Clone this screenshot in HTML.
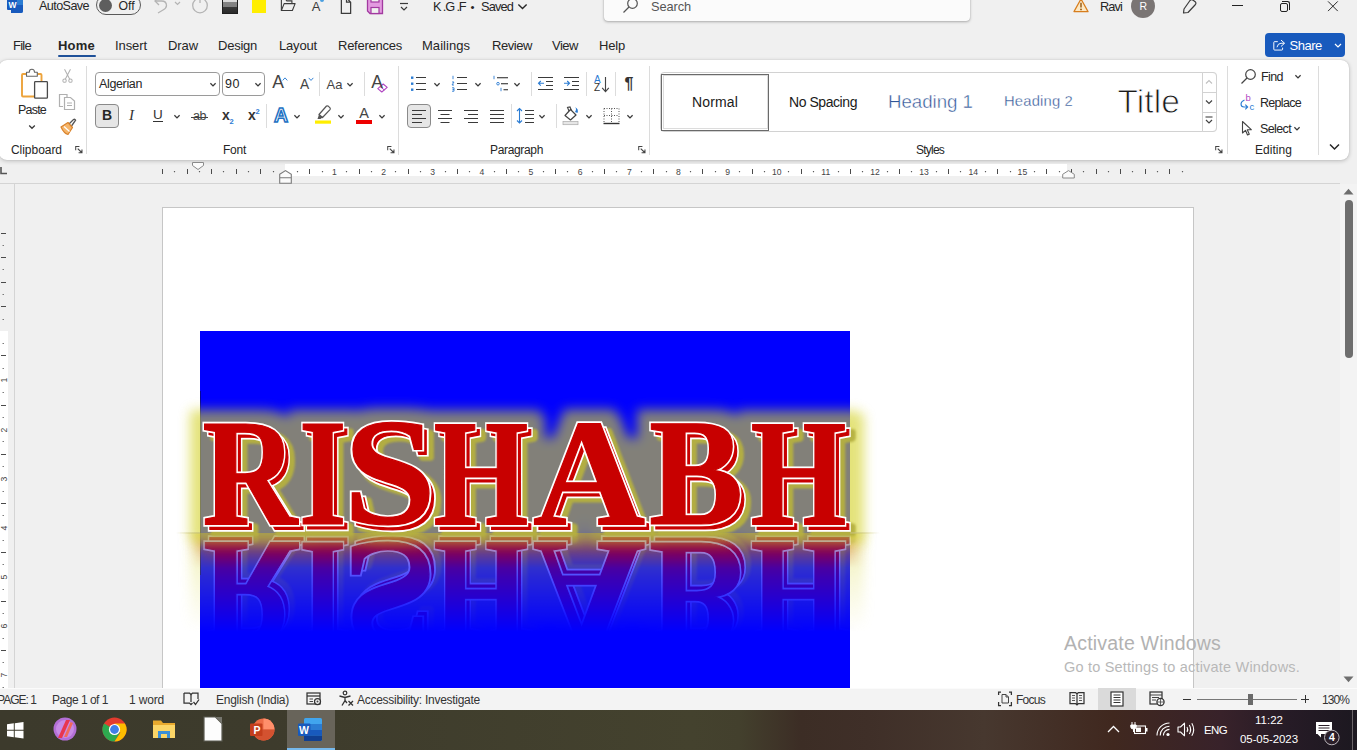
<!DOCTYPE html>
<html lang="en"><head><meta charset="utf-8"><title>K.G.F - Word</title>
<style>
*{box-sizing:border-box;margin:0;padding:0}
html,body{width:1357px;height:750px;overflow:hidden;background:#f0f0f0;font-family:"Liberation Sans",sans-serif;}
.a{position:absolute}
.t{position:absolute;white-space:nowrap;display:block}
svg{position:absolute;overflow:visible}
.rn{width:20px;text-align:center;font-size:8.6px;line-height:12px;color:#444}
.vn{width:20px;height:12px;text-align:center;font-size:8.6px;line-height:12px;color:#444;transform:rotate(-90deg)}
</style></head><body>

<!-- TITLE BAR -->
<div class="a" style="left:0;top:0;width:1357px;height:62px;background:#f0f0f0"></div>
<!-- word logo -->
<div class="a" style="left:11px;top:-4px;width:12px;height:17px;background:#2b7cd3;border-radius:0 0 2px 0"></div>
<div class="a" style="left:11px;top:5px;width:12px;height:8px;background:#185abd;border-radius:0 0 2px 0"></div>
<div class="a" style="left:7px;top:-2px;width:10px;height:12px;background:#185abd;border-radius:1px"></div>
<!-- autosave toggle -->
<div class="a" style="left:96px;top:-5px;width:45px;height:19.5px;border:1px solid #5a5a5a;border-radius:10px;background:#f0f0f0"></div>
<div class="a" style="left:98.7px;top:-1.4px;width:13.5px;height:13.5px;border-radius:7px;background:#5e5e5e"></div>
<div class="a" style="left:320px;top:-2.3px;width:4px;height:4px;border-radius:2px;background:#4a9fe0"></div>
<!-- undo -->
<svg style="left:152px;top:-3px" width="30" height="18" viewBox="0 0 30 18"><path d="M3 4 L9.5 4 Q14.5 4 14.5 8.5 Q14.5 11 11 13 L6 16" fill="none" stroke="#b4b4b4" stroke-width="1.3"/><path d="M7 0 L3 4 L7 8" fill="none" stroke="#b4b4b4" stroke-width="1.3"/><path d="M23 5 L25.5 7.5 L28 5" fill="none" stroke="#b4b4b4" stroke-width="1.2"/></svg>
<!-- redo circle -->
<svg style="left:191px;top:-4px" width="18" height="18" viewBox="0 0 18 18"><circle cx="9" cy="9.5" r="7.3" fill="none" stroke="#b4b4b4" stroke-width="1.3"/><path d="M9 2 L9 7" stroke="#b4b4b4" stroke-width="1.3"/></svg>
<!-- grey/black box -->
<div class="a" style="left:222px;top:-4px;width:16px;height:17.8px;background:linear-gradient(#e8e8e8 0,#d8d8d8 36%,#858585 36%,#7f7f7f 64%,#3a3a3a 64%,#2a2a2a 100%);border:1px solid #1e1e1e;border-top:none"></div>
<!-- yellow box -->
<div class="a" style="left:252px;top:-4px;width:14px;height:16.8px;background:#ffee00"></div>
<!-- open folder -->
<svg style="left:279.5px;top:-1.8px" width="16.5" height="15" viewBox="0 0 18 16"><path d="M1.5 13.5 L1.5 1 L6 1 L7.5 3 L13 3 L13 6" fill="none" stroke="#3b3b3b" stroke-width="1.2"/><path d="M1.5 13.5 L4.5 6 L16.5 6 L13.5 13.5 Z" fill="none" stroke="#3b3b3b" stroke-width="1.2" stroke-linejoin="round"/></svg>
<!-- page -->
<svg style="left:340.3px;top:-3px" width="12" height="17.5" viewBox="0 0 11 17"><path d="M1 0 L1 16 L10 16 L10 5 L6 1 M6 0 L6 5 L10 5" fill="none" stroke="#3b3b3b" stroke-width="1.2"/></svg>
<!-- save purple -->
<svg style="left:366px;top:-3.4px" width="18" height="18" viewBox="0 0 18 18"><path d="M1.5 0 L1.5 14 L4 16.5 L16.5 16.5 L16.5 0 Z" fill="#e39ae0" stroke="#a23aa0" stroke-width="1.3"/><rect x="5" y="-1" width="8" height="6" fill="#f0f0f0" stroke="#a23aa0" stroke-width="1.2"/><rect x="5" y="10.5" width="8" height="6" fill="#f0f0f0" stroke="#a23aa0" stroke-width="1.2"/></svg>
<!-- customise qat -->
<svg style="left:398.5px;top:1.6px" width="10" height="10" viewBox="0 0 10 10"><path d="M1 1.5 L9 1.5" stroke="#3b3b3b" stroke-width="1.2"/><path d="M2 5 L5 8 L8 5" fill="none" stroke="#3b3b3b" stroke-width="1.2"/></svg>
<!-- saved chevron -->
<svg style="left:516.5px;top:3.2px" width="11" height="7.4" viewBox="0 0 12 8"><path d="M1.5 1.5 L6 6 L10.5 1.5" fill="none" stroke="#262626" stroke-width="1.5"/></svg>
<!-- search box -->
<div class="a" style="left:603.5px;top:-10px;width:366.5px;height:31.3px;background:#fbfbfb;border-radius:4px;box-shadow:0 1px 3px rgba(0,0,0,.28),0 0 1px rgba(0,0,0,.25)"></div>
<svg style="left:622px;top:-3px" width="17" height="17" viewBox="0 0 17 17"><circle cx="10.5" cy="6.5" r="4.8" fill="none" stroke="#555" stroke-width="1.2"/><path d="M7 10 L1.5 15.5" stroke="#555" stroke-width="1.3"/></svg>
<!-- warning -->
<svg style="left:1072.5px;top:-2.3px" width="16" height="15" viewBox="0 0 17 16"><path d="M8.5 1 L16 14.5 L1 14.5 Z" fill="#fce8c4" stroke="#d77d1d" stroke-width="1.3" stroke-linejoin="round"/><path d="M8.5 5 L8.5 10" stroke="#8a4a00" stroke-width="1.4"/><circle cx="8.5" cy="12.2" r=".9" fill="#8a4a00"/></svg>
<!-- avatar -->
<div class="a" style="left:1131px;top:-6px;width:24px;height:24px;border-radius:12px;background:#7a7574"></div>
<!-- pen -->
<svg style="left:1181px;top:-4px" width="19" height="19" viewBox="0 0 19 19"><path d="M3 13 L9 4.5 Q10.5 3 12.5 4.5 L14.5 6 Q15.5 7.5 14 9 L7 16.5 L2.5 17 Z" fill="none" stroke="#3b3b3b" stroke-width="1.2" stroke-linejoin="round"/><path d="M12 2 L15 0 M15.5 3 L17.5 2" stroke="#2b7cd3" stroke-width="1.1"/></svg>
<!-- window buttons -->
<div class="a" style="left:1232px;top:4.6px;width:10.5px;height:1.1px;background:#222"></div>
<div class="a" style="left:1279.5px;top:3px;width:8.5px;height:8.5px;border:1px solid #222;border-radius:2px"></div>
<div class="a" style="left:1281.5px;top:1px;width:8.5px;height:8.5px;border:1px solid #222;border-left:none;border-bottom:none;border-radius:0 2.5px 0 0"></div>
<svg style="left:1327.3px;top:.6px" width="11.8" height="11.3" viewBox="0 0 14 14"><path d="M1 .5 L13 12.5 M13 .5 L1 12.5" stroke="#222" stroke-width="1.2"/></svg>
<!-- home underline -->
<div class="a" style="left:58px;top:55px;width:37.5px;height:2px;background:#1f5199;border-radius:1px"></div>
<!-- share button -->
<div class="a" style="left:1265px;top:33px;width:80px;height:24px;background:#185abd;border-radius:4px"></div>
<svg style="left:1272.6px;top:39px" width="12.8" height="12.5" viewBox="0 0 16 15"><path d="M6 3 L2 3 Q1 3 1 4 L1 12.5 Q1 13.5 2 13.5 L11 13.5 Q12 13.5 12 12.5 L12 10.5" fill="none" stroke="#fff" stroke-width="1.2"/><path d="M10 1 L14.5 5 L10 9 M14 5 L10 5 Q6 5 5 10" fill="none" stroke="#fff" stroke-width="1.2"/></svg>
<svg style="left:1334px;top:43px" width="8" height="6" viewBox="0 0 8 6"><path d="M1 1 L4 4 L7 1" fill="none" stroke="#fff" stroke-width="1.2"/></svg>

<!-- RIBBON -->
<div class="a" style="left:-1px;top:60px;width:1350px;height:100px;background:#fff;border-radius:8px;box-shadow:0 1px 4px rgba(0,0,0,.22),0 0 1px rgba(0,0,0,.2)"></div>
<!-- group separators -->
<div class="a" style="left:86.2px;top:66px;width:1px;height:88px;background:#dcdcdc"></div>
<div class="a" style="left:398px;top:66px;width:1px;height:89px;background:#dcdcdc"></div>
<div class="a" style="left:649px;top:66px;width:1px;height:89px;background:#dcdcdc"></div>
<div class="a" style="left:1227.3px;top:66px;width:1px;height:88px;background:#dcdcdc"></div>
<div class="a" style="left:1318px;top:66px;width:1px;height:89px;background:#dcdcdc"></div>
<!-- small separators -->
<div class="a" style="left:319.2px;top:72px;width:1px;height:24px;background:#dcdcdc"></div>
<div class="a" style="left:364px;top:72px;width:1px;height:24px;background:#dcdcdc"></div>
<div class="a" style="left:266px;top:104px;width:1px;height:24px;background:#dcdcdc"></div>
<div class="a" style="left:531px;top:72px;width:1px;height:24px;background:#dcdcdc"></div>
<div class="a" style="left:586px;top:72px;width:1px;height:24px;background:#dcdcdc"></div>
<div class="a" style="left:615px;top:72px;width:1px;height:24px;background:#dcdcdc"></div>
<div class="a" style="left:511px;top:104px;width:1px;height:24px;background:#dcdcdc"></div>
<div class="a" style="left:556px;top:104px;width:1px;height:24px;background:#dcdcdc"></div>

<!-- CLIPBOARD -->
<svg style="left:19px;top:67px" width="30" height="33" viewBox="0 0 30 33"><rect x="3" y="7" width="19.5" height="22.5" rx="1" fill="#fff" stroke="#eda33b" stroke-width="1.9"/><path d="M7.5 9.2 L7.5 5.2 L10.3 5.2 Q10.3 2.2 12.9 2.2 Q15.5 2.2 15.5 5.2 L18.3 5.2 L18.3 9.2 Z" fill="#fff" stroke="#666" stroke-width="1.1" stroke-linejoin="round"/><rect x="15.6" y="14.6" width="12.8" height="16.6" rx=".8" fill="#fff" stroke="#4a4a4a" stroke-width="1.3"/></svg>
<svg style="left:27.5px;top:123.5px" width="8" height="6" viewBox="0 0 8 6"><path d="M1.2 1.5 L4 4.3 L6.8 1.5" fill="none" stroke="#3a3a3a" stroke-width="1.3"/></svg>
<!-- cut -->
<svg style="left:61.8px;top:68px" width="11" height="16" viewBox="0 0 13 18"><path d="M3 1 L9 12.5 M10 1 L4 12.5" stroke="#b0b0b0" stroke-width="1.2" fill="none"/><circle cx="3" cy="14.5" r="2" fill="none" stroke="#b0b0b0" stroke-width="1.2"/><circle cx="10" cy="14.5" r="2" fill="none" stroke="#b0b0b0" stroke-width="1.2"/></svg>
<!-- copy -->
<svg style="left:58px;top:93px" width="18" height="18" viewBox="0 0 18 18"><path d="M5 13.5 L1.5 13.5 L1.5 1.5 L9 1.5 L9 4" fill="none" stroke="#b0b0b0" stroke-width="1.2"/><path d="M6.5 4.5 L12.5 4.5 L16.5 8 L16.5 16.5 L6.5 16.5 Z" fill="#fff" stroke="#b0b0b0" stroke-width="1.2"/><path d="M9 10 L14 10 M9 12.5 L14 12.5" stroke="#b0b0b0" stroke-width="1"/></svg>
<!-- format painter -->
<svg style="left:59px;top:118px" width="18" height="18" viewBox="0 0 18 18"><path d="M10 6 L14.5 1.5 Q16 .8 16.6 2.2 L12.5 8" fill="none" stroke="#555" stroke-width="1.3"/><path d="M2 9 L9 4.5 L13.5 9.5 L9 16.5 Q5 15.5 2 9 Z" fill="#f5b56a" stroke="#d9822b" stroke-width="1.2" stroke-linejoin="round"/><path d="M5 8.5 L10.5 13.5" stroke="#fff" stroke-width="1.2"/></svg>
<!-- launchers -->
<svg class="ln" style="left:75.2px;top:146.3px" width="8" height="7.6" viewBox="0 0 9 9"><path d="M.6 5 L.6 .6 L5 .6" fill="none" stroke="#444" stroke-width="1.2"/><path d="M3 3 L8 8 M8 4 L8 8 L4 8" fill="none" stroke="#444" stroke-width="1.3"/></svg>
<svg class="ln" style="left:387.2px;top:146.3px" width="8" height="7.6" viewBox="0 0 9 9"><path d="M.6 5 L.6 .6 L5 .6" fill="none" stroke="#444" stroke-width="1.2"/><path d="M3 3 L8 8 M8 4 L8 8 L4 8" fill="none" stroke="#444" stroke-width="1.3"/></svg>
<svg class="ln" style="left:637.5px;top:146.3px" width="8" height="7.6" viewBox="0 0 9 9"><path d="M.6 5 L.6 .6 L5 .6" fill="none" stroke="#444" stroke-width="1.2"/><path d="M3 3 L8 8 M8 4 L8 8 L4 8" fill="none" stroke="#444" stroke-width="1.3"/></svg>
<svg class="ln" style="left:1215.2px;top:146.3px" width="8" height="7.6" viewBox="0 0 9 9"><path d="M.6 5 L.6 .6 L5 .6" fill="none" stroke="#444" stroke-width="1.2"/><path d="M3 3 L8 8 M8 4 L8 8 L4 8" fill="none" stroke="#444" stroke-width="1.3"/></svg>

<!-- FONT group -->
<div class="a" style="left:95px;top:72px;width:125px;height:24px;border:1px solid #9a9a9a;border-radius:4px;background:#fff"></div>
<div class="a" style="left:222px;top:72px;width:43px;height:24px;border:1px solid #9a9a9a;border-radius:4px;background:#fff"></div>
<svg style="left:209px;top:82px" width="8" height="6" viewBox="0 0 8 6"><path d="M1.4 1.3 L4 3.9 L6.6 1.3" fill="none" stroke="#3a3a3a" stroke-width="1.3"/></svg>
<svg style="left:254px;top:82px" width="8" height="6" viewBox="0 0 8 6"><path d="M1.4 1.3 L4 3.9 L6.6 1.3" fill="none" stroke="#3a3a3a" stroke-width="1.3"/></svg>
<!-- grow / shrink carets -->
<svg style="left:281.8px;top:76.8px" width="6" height="4.3" viewBox="0 0 7 5"><path d="M.8 4 L3.5 1 L6.2 4" fill="none" stroke="#2b7cd3" stroke-width="1.1"/></svg>
<svg style="left:307.8px;top:77px" width="6" height="4.3" viewBox="0 0 7 5"><path d="M.8 1 L3.5 4 L6.2 1" fill="none" stroke="#2b7cd3" stroke-width="1.1"/></svg>
<svg style="left:346px;top:82px" width="8" height="6" viewBox="0 0 8 6"><path d="M1.4 1.3 L4 3.9 L6.6 1.3" fill="none" stroke="#3a3a3a" stroke-width="1.3"/></svg>
<!-- clear formatting eraser -->
<svg style="left:377px;top:82.5px" width="11" height="10" viewBox="0 0 11 10"><path d="M.8 5.6 L6.2 1 L10.2 4.4 L4.8 9 Z" fill="#fff" stroke="#b146c2" stroke-width="1.1" stroke-linejoin="round"/><path d="M3.2 3.7 L7.4 7" stroke="#b146c2" stroke-width="1"/></svg>
<!-- Bold button -->
<div class="a" style="left:95px;top:104px;width:24px;height:24px;border:1px solid #8a8a8a;border-radius:4px;background:#e6e6e6"></div>
<div class="a" style="left:153px;top:121.3px;width:10px;height:1.2px;background:#333"></div>
<svg style="left:173px;top:114px" width="8" height="6" viewBox="0 0 8 6"><path d="M1.4 1.3 L4 3.9 L6.6 1.3" fill="none" stroke="#3a3a3a" stroke-width="1.3"/></svg>
<div class="a" style="left:191px;top:116.5px;width:17px;height:1px;background:#444"></div>
<!-- text effects A -->
<svg style="left:293px;top:114px" width="8" height="6" viewBox="0 0 8 6"><path d="M1.4 1.3 L4 3.9 L6.6 1.3" fill="none" stroke="#3a3a3a" stroke-width="1.3"/></svg>
<!-- highlighter -->
<svg style="left:314px;top:104px" width="19" height="20" viewBox="0 0 19 20"><path d="M5 10.5 L12.5 2 Q13.5 1.5 14.5 2.3 L16 3.8 Q16.6 4.8 16 5.6 L8.5 13.5 Z" fill="none" stroke="#555" stroke-width="1.2" stroke-linejoin="round"/><path d="M5 10.5 L8.5 13.5 L6.5 15 L3.5 15 Z" fill="#555"/><rect x="1" y="16.5" width="16" height="3.2" fill="#ffee00"/></svg>
<svg style="left:337px;top:114px" width="8" height="6" viewBox="0 0 8 6"><path d="M1.4 1.3 L4 3.9 L6.6 1.3" fill="none" stroke="#3a3a3a" stroke-width="1.3"/></svg>
<div class="a" style="left:356.3px;top:120.2px;width:15.7px;height:3.5px;background:#ee0000"></div>
<svg style="left:378px;top:114px" width="8" height="6" viewBox="0 0 8 6"><path d="M1.4 1.3 L4 3.9 L6.6 1.3" fill="none" stroke="#3a3a3a" stroke-width="1.3"/></svg>

<!-- PARAGRAPH group row 1 -->
<svg style="left:410px;top:75px" width="18" height="18" viewBox="0 0 18 18"><rect x="1" y="1.5" width="2.4" height="2.4" fill="#2b7cd3"/><rect x="1" y="7.5" width="2.4" height="2.4" fill="#2b7cd3"/><rect x="1" y="13.5" width="2.4" height="2.4" fill="#2b7cd3"/><path d="M6 2.5 H16 M6 8.5 H16 M6 14.5 H16" stroke="#3a3a3a" stroke-width="1"/></svg>
<svg style="left:433px;top:82px" width="8" height="6" viewBox="0 0 8 6"><path d="M1.4 1.3 L4 3.9 L6.6 1.3" fill="none" stroke="#3a3a3a" stroke-width="1.3"/></svg>
<svg style="left:451px;top:75px" width="18" height="18" viewBox="0 0 18 18"><path d="M2 .8 L2 4.2 M1 7 L3 7 L1 10 L3 10 M1 12.8 L3 12.8 L3 16.2 L1 16.2 M1.5 14.5 L3 14.5" stroke="#2b7cd3" stroke-width=".9" fill="none"/><path d="M6 2.5 H16 M6 8.5 H16 M6 14.5 H16" stroke="#3a3a3a" stroke-width="1"/></svg>
<svg style="left:474px;top:82px" width="8" height="6" viewBox="0 0 8 6"><path d="M1.4 1.3 L4 3.9 L6.6 1.3" fill="none" stroke="#3a3a3a" stroke-width="1.3"/></svg>
<svg style="left:492px;top:75px" width="18" height="18" viewBox="0 0 18 18"><path d="M2 .8 L2 4.2" stroke="#2b7cd3" stroke-width=".9"/><path d="M5 2.7 L16 2.7" stroke="#444" stroke-width="1.2"/><circle cx="6" cy="8.7" r="1.3" fill="none" stroke="#2b7cd3" stroke-width=".9"/><path d="M9 8.7 L16 8.7" stroke="#444" stroke-width="1.2"/><path d="M9 12.8 L9 16.2" stroke="#2b7cd3" stroke-width=".9"/><path d="M11.5 14.7 L16 14.7" stroke="#444" stroke-width="1.2"/></svg>
<svg style="left:513px;top:82px" width="8" height="6" viewBox="0 0 8 6"><path d="M1.4 1.3 L4 3.9 L6.6 1.3" fill="none" stroke="#3a3a3a" stroke-width="1.3"/></svg>
<!-- indents -->
<svg style="left:537px;top:75px" width="18" height="18" viewBox="0 0 18 18"><path d="M1 2.5 H16 M9 6.5 H16 M9 10.5 H16 M1 14.5 H16" stroke="#3a3a3a" stroke-width="1"/><path d="M7 8.3 L1.5 8.3 M3.8 6 L1.5 8.3 L3.8 10.6" fill="none" stroke="#2b7cd3" stroke-width="1.1"/></svg>
<svg style="left:563px;top:75px" width="18" height="18" viewBox="0 0 18 18"><path d="M1 2.5 H16 M9 6.5 H16 M9 10.5 H16 M1 14.5 H16" stroke="#3a3a3a" stroke-width="1"/><path d="M1 8.3 L6.5 8.3 M4.2 6 L6.5 8.3 L4.2 10.6" fill="none" stroke="#2b7cd3" stroke-width="1.1"/></svg>
<!-- sort arrow -->
<svg style="left:600.8px;top:76.5px" width="9" height="16" viewBox="0 0 9 17"><path d="M4.5 0 L4.5 15 M1 11.5 L4.5 15.5 L8 11.5" fill="none" stroke="#444" stroke-width="1.2"/></svg>
<!-- row 2 align -->
<div class="a" style="left:407px;top:104px;width:24px;height:24px;border:1px solid #8a8a8a;border-radius:4px;background:#e6e6e6"></div>
<svg style="left:411px;top:108px" width="16" height="16" viewBox="0 0 16 16"><path d="M1 2.5 H15 M1 6.5 H11 M1 10.5 H15 M1 14.5 H11" stroke="#3a3a3a" stroke-width="1"/></svg>
<svg style="left:437px;top:108px" width="16" height="16" viewBox="0 0 16 16"><path d="M1 2.5 H15 M3.5 6.5 H12.5 M1 10.5 H15 M3.5 14.5 H12.5" stroke="#3a3a3a" stroke-width="1"/></svg>
<svg style="left:463px;top:108px" width="16" height="16" viewBox="0 0 16 16"><path d="M1 2.5 H15 M5 6.5 H15 M1 10.5 H15 M5 14.5 H15" stroke="#3a3a3a" stroke-width="1"/></svg>
<svg style="left:489px;top:108px" width="16" height="16" viewBox="0 0 16 16"><path d="M1 2.5 H15 M1 6.5 H15 M1 10.5 H15 M1 14.5 H15" stroke="#3a3a3a" stroke-width="1"/></svg>
<!-- line spacing -->
<svg style="left:516px;top:107px" width="19" height="18" viewBox="0 0 19 18"><path d="M3.5 1.5 L3.5 16 M1 4 L3.5 1.5 L6 4 M1 13.5 L3.5 16 L6 13.5" fill="none" stroke="#2b7cd3" stroke-width="1.1"/><path d="M9 3.5 H18 M9 7.5 H18 M9 11.5 H18 M9 15.5 H18" stroke="#3a3a3a" stroke-width="1"/></svg>
<svg style="left:538px;top:114px" width="8" height="6" viewBox="0 0 8 6"><path d="M1.4 1.3 L4 3.9 L6.6 1.3" fill="none" stroke="#3a3a3a" stroke-width="1.3"/></svg>
<!-- shading -->
<svg style="left:562px;top:106px" width="19" height="20" viewBox="0 0 19 20"><path d="M3 9.5 L8.5 3.5 L14 9 L8.5 14 Z" fill="none" stroke="#444" stroke-width="1.2" stroke-linejoin="round"/><path d="M7 5 L5.5 1.5 L8 1 L9.5 4.5" fill="none" stroke="#444" stroke-width="1.1"/><path d="M13 6 Q15 3 13 1 Q17 3 15.5 7 Z" fill="#2b7cd3"/><rect x="1" y="15.5" width="15" height="3.2" fill="#e6e6e6" stroke="#aaa" stroke-width=".7"/></svg>
<svg style="left:585px;top:114px" width="8" height="6" viewBox="0 0 8 6"><path d="M1.4 1.3 L4 3.9 L6.6 1.3" fill="none" stroke="#3a3a3a" stroke-width="1.3"/></svg>
<!-- borders -->
<svg style="left:603px;top:107px" width="17" height="18" viewBox="0 0 17 18"><path d="M1 1.5 L16 1.5 M1 1.5 L1 16 M16 1.5 L16 16 M8.5 1.5 L8.5 16 M1 8.5 L16 8.5" stroke="#555" stroke-width="1" stroke-dasharray="1 1.5"/><path d="M.5 16.5 L16.5 16.5" stroke="#333" stroke-width="1.4"/></svg>
<svg style="left:626px;top:114px" width="8" height="6" viewBox="0 0 8 6"><path d="M1.4 1.3 L4 3.9 L6.6 1.3" fill="none" stroke="#3a3a3a" stroke-width="1.3"/></svg>

<!-- STYLES gallery -->
<div class="a" style="left:660px;top:72px;width:556.5px;height:60px;border:1px solid #d2d2d2;border-radius:4px;background:#fff"></div>
<div class="a" style="left:661px;top:73.5px;width:108px;height:57px;border:1.5px solid #6a6a6a;background:#fff"></div>
<div class="a" style="left:662.5px;top:75px;width:105px;height:54px;border:1.5px solid #dcdcdc"></div>
<div class="a" style="left:1202px;top:72px;width:14.5px;height:60px;border:1px solid #d2d2d2;border-radius:0 4px 4px 0;background:#fff"></div>
<div class="a" style="left:1202px;top:91.5px;width:14.5px;height:1px;background:#d2d2d2"></div>
<div class="a" style="left:1202px;top:111.5px;width:14.5px;height:1px;background:#d2d2d2"></div>
<svg style="left:1205px;top:79px" width="8" height="6" viewBox="0 0 8 6"><path d="M1 4.5 L4 1.5 L7 4.5" fill="none" stroke="#c0c0c0" stroke-width="1.1"/></svg>
<svg style="left:1205px;top:99px" width="8" height="6" viewBox="0 0 8 6"><path d="M1 1.5 L4 4.5 L7 1.5" fill="none" stroke="#444" stroke-width="1.2"/></svg>
<svg style="left:1205px;top:116px" width="8" height="9" viewBox="0 0 8 9"><path d="M.5 1 L7.5 1" stroke="#444" stroke-width="1.1"/><path d="M1 4 L4 7 L7 4" fill="none" stroke="#444" stroke-width="1.2"/></svg>

<!-- EDITING -->
<svg style="left:1240px;top:68px" width="17" height="17" viewBox="0 0 17 17"><circle cx="10.5" cy="6.5" r="4.8" fill="none" stroke="#444" stroke-width="1.2"/><path d="M7 10 L1.5 15.5" stroke="#444" stroke-width="1.3"/></svg>
<svg style="left:1294px;top:74px" width="8" height="6" viewBox="0 0 8 6"><path d="M1.4 1.3 L4 3.9 L6.6 1.3" fill="none" stroke="#3a3a3a" stroke-width="1.3"/></svg>
<svg style="left:1239.5px;top:98.5px" width="10" height="11" viewBox="0 0 10 11"><path d="M4.5 1 Q1 2.5 1 5 Q1 8 4 8 L7.5 8 M5.3 5.6 L7.7 8 L5.3 10.4" fill="none" stroke="#2b7cd3" stroke-width="1.1"/></svg>
<svg style="left:1241px;top:120px" width="12" height="17" viewBox="0 0 12 17"><path d="M1.5 1.5 L1.5 13 L4.5 10.3 L6.5 15 L8.3 14.2 L6.3 9.7 L10.3 9.7 Z" fill="#fff" stroke="#444" stroke-width="1.1" stroke-linejoin="round"/></svg>
<svg style="left:1293px;top:126px" width="8" height="6" viewBox="0 0 8 6"><path d="M1.4 1.3 L4 3.9 L6.6 1.3" fill="none" stroke="#3a3a3a" stroke-width="1.3"/></svg>
<svg style="left:1329px;top:143px" width="11" height="8" viewBox="0 0 11 8"><path d="M1 1.5 L5.5 6 L10 1.5" fill="none" stroke="#262626" stroke-width="1.5"/></svg>

<!-- RULERS -->
<div class="a" style="left:285px;top:164px;width:782px;height:12px;background:#fff"></div>
<div class="a" style="left:0;top:183px;width:1340px;height:1px;background:#d4d4d4"></div>
<div class="a" style="left:13.5px;top:183px;width:1px;height:505px;background:#d4d4d4"></div>
<svg style="left:0;top:167px" width="8" height="8" viewBox="0 0 8 8"><path d="M1 0 L1 6.5 L7 6.5" fill="none" stroke="#555" stroke-width="1.6"/></svg>
<svg style="left:0;top:0" width="1357" height="200"><path d="M162.5 169V174M187.5 169V174M211.5 169V174M236.5 169V174M260.5 169V174M309.5 169V174M359.5 169V174M408.5 169V174M457.5 169V174M506.5 169V174M555.5 169V174M604.5 169V174M653.5 169V174M702.5 169V174M752.5 169V174M801.5 169V174M850.5 169V174M899.5 169V174M948.5 169V174M997.5 169V174M1046.5 169V174M1071.5 169V174M1096.5 169V174M1120.5 169V174M1145.5 169V174M1169.5 169V174" stroke="#4a4a4a" stroke-width="1" fill="none"/><path d="M174.5 171V172.2M199.5 171V172.2M223.5 171V172.2M248.5 171V172.2M273.5 171V172.2M297.5 171V172.2M322.5 171V172.2M346.5 171V172.2M371.5 171V172.2M395.5 171V172.2M420.5 171V172.2M445.5 171V172.2M469.5 171V172.2M494.5 171V172.2M518.5 171V172.2M543.5 171V172.2M567.5 171V172.2M592.5 171V172.2M616.5 171V172.2M641.5 171V172.2M666.5 171V172.2M690.5 171V172.2M715.5 171V172.2M739.5 171V172.2M764.5 171V172.2M788.5 171V172.2M813.5 171V172.2M838.5 171V172.2M862.5 171V172.2M887.5 171V172.2M911.5 171V172.2M936.5 171V172.2M960.5 171V172.2M985.5 171V172.2M1010.5 171V172.2M1034.5 171V172.2M1059.5 171V172.2M1083.5 171V172.2M1108.5 171V172.2M1132.5 171V172.2M1157.5 171V172.2M1182.5 171V172.2" stroke="#5c5c5c" stroke-width="1.2" fill="none"/></svg>
<span class="t rn" style="left:324.4px;top:165.5px">1</span>
<span class="t rn" style="left:373.6px;top:165.5px">2</span>
<span class="t rn" style="left:422.7px;top:165.5px">3</span>
<span class="t rn" style="left:471.9px;top:165.5px">4</span>
<span class="t rn" style="left:521.0px;top:165.5px">5</span>
<span class="t rn" style="left:570.1px;top:165.5px">6</span>
<span class="t rn" style="left:619.3px;top:165.5px">7</span>
<span class="t rn" style="left:668.4px;top:165.5px">8</span>
<span class="t rn" style="left:717.6px;top:165.5px">9</span>
<span class="t rn" style="left:766.7px;top:165.5px">10</span>
<span class="t rn" style="left:815.8px;top:165.5px">11</span>
<span class="t rn" style="left:865.0px;top:165.5px">12</span>
<span class="t rn" style="left:914.1px;top:165.5px">13</span>
<span class="t rn" style="left:963.3px;top:165.5px">14</span>
<span class="t rn" style="left:1012.4px;top:165.5px">15</span>
<svg style="left:192px;top:162px" width="12" height="8" viewBox="0 0 12 8"><path d="M.5 .5 L11.5 .5 L11.5 3.5 L6 7.5 L.5 3.5 Z" fill="#fbfbfb" stroke="#8a8a8a" stroke-width="1"/></svg>
<svg style="left:278.5px;top:170px" width="13" height="14" viewBox="0 0 13 14"><path d="M.7 4.3 L6.5 .6 L12.3 4.3 L12.3 13.3 L.7 13.3 Z M.7 7.8 L12.3 7.8" fill="#fbfbfb" stroke="#7a7a7a" stroke-width="1.1"/></svg>
<svg style="left:1061.5px;top:170px" width="13" height="9" viewBox="0 0 13 9"><path d="M.7 4.3 L6.5 .6 L12.3 4.3 L12.3 8 L.7 8 Z" fill="#fbfbfb" stroke="#8a8a8a" stroke-width="1"/></svg>
<div class="a" style="left:0;top:331px;width:8px;height:357px;background:#fff"></div>
<svg style="left:0;top:0" width="20" height="750"><path d="M1 233.5H6M1 257.5H6M1 282.5H6M1 306.5H6M1 355.5H6M1 405.5H6M1 454.5H6M1 503.5H6M1 552.5H6M1 601.5H6M1 650.5H6" stroke="#4a4a4a" stroke-width="1" fill="none"/><path d="M2.6 245.5H3.8M2.6 269.5H3.8M2.6 294.5H3.8M2.6 319.5H3.8M2.6 343.5H3.8M2.6 368.5H3.8M2.6 392.5H3.8M2.6 417.5H3.8M2.6 441.5H3.8M2.6 466.5H3.8M2.6 491.5H3.8M2.6 515.5H3.8M2.6 540.5H3.8M2.6 564.5H3.8M2.6 589.5H3.8M2.6 613.5H3.8M2.6 638.5H3.8M2.6 662.5H3.8M2.6 687.5H3.8" stroke="#5c5c5c" stroke-width="1.2" fill="none"/></svg>
<span class="t vn" style="left:-6px;top:374.4px">1</span>
<span class="t vn" style="left:-6px;top:423.6px">2</span>
<span class="t vn" style="left:-6px;top:472.7px">3</span>
<span class="t vn" style="left:-6px;top:521.9px">4</span>
<span class="t vn" style="left:-6px;top:571.0px">5</span>
<span class="t vn" style="left:-6px;top:620.1px">6</span>
<span class="t vn" style="left:-6px;top:669.3px">7</span>

<!-- DOCUMENT -->
<div class="a" style="left:161.5px;top:206.5px;width:1032px;height:490px;background:#fff;border:1px solid #c6c6c6"></div>
<div class="a" style="left:200px;top:331px;width:650px;height:360px;background:#0000ff"></div>
<div class="a" style="left:200px;top:391px;width:1px;height:184px;background:rgba(10,10,70,.55)"></div>
<svg style="left:0;top:0" width="1357" height="690" viewBox="0 0 1357 690" font-family="'Liberation Serif',serif" font-weight="700" font-size="152.5">
<defs>
<filter id="fg" filterUnits="userSpaceOnUse" x="120" y="330" width="820" height="320"><feMorphology operator="dilate" radius="14"/><feGaussianBlur stdDeviation="6"/></filter>
<filter id="fr" filterUnits="userSpaceOnUse" x="120" y="330" width="820" height="320"><feMorphology operator="dilate" radius="7"/><feGaussianBlur stdDeviation="7"/></filter>
<filter id="fb" filterUnits="userSpaceOnUse" x="120" y="500" width="820" height="200"><feGaussianBlur stdDeviation=".7"/></filter>
<filter id="fo" filterUnits="userSpaceOnUse" x="120" y="330" width="820" height="320"><feGaussianBlur stdDeviation="1.3"/></filter>
<linearGradient id="fade" x1="0" y1="533" x2="0" y2="632" gradientUnits="userSpaceOnUse"><stop offset="0" stop-color="#fff" stop-opacity=".62"/><stop offset=".45" stop-color="#fff" stop-opacity=".3"/><stop offset="1" stop-color="#fff" stop-opacity="0"/></linearGradient>
<linearGradient id="hl" x1="176" y1="0" x2="880" y2="0" gradientUnits="userSpaceOnUse"><stop offset="0" stop-color="#c8c278" stop-opacity="0"/><stop offset=".03" stop-color="#c8c278" stop-opacity=".65"/><stop offset=".965" stop-color="#c8c278" stop-opacity=".65"/><stop offset="1" stop-color="#c8c278" stop-opacity="0"/></linearGradient>
<linearGradient id="fade2" x1="0" y1="533" x2="0" y2="568" gradientUnits="userSpaceOnUse"><stop offset="0" stop-color="#fff" stop-opacity=".55"/><stop offset=".45" stop-color="#fff" stop-opacity=".36"/><stop offset="1" stop-color="#fff" stop-opacity="0"/></linearGradient>
<mask id="rm2" maskUnits="userSpaceOnUse" x="100" y="533" width="900" height="60"><rect x="100" y="533" width="900" height="60" fill="url(#fade2)"/></mask>
<mask id="rm" maskUnits="userSpaceOnUse" x="100" y="533" width="900" height="187"><rect x="100" y="533" width="900" height="187" fill="url(#fade)"/></mask>
</defs>
<g mask="url(#rm2)"><g transform="translate(0,1066.5) scale(1,-1)"><g filter="url(#fr)"><text y="524" fill="#c80000"><tspan x="202.3" textLength="95.1" lengthAdjust="spacingAndGlyphs">R</tspan><tspan x="299.0" textLength="47.5" lengthAdjust="spacingAndGlyphs">I</tspan><tspan x="343.5" textLength="92.5" lengthAdjust="spacingAndGlyphs">S</tspan><tspan x="433.4" textLength="94.9" lengthAdjust="spacingAndGlyphs">H</tspan><tspan x="533.0" textLength="112.2" lengthAdjust="spacingAndGlyphs">A</tspan><tspan x="649.1" textLength="94.3" lengthAdjust="spacingAndGlyphs">B</tspan><tspan x="750.4" textLength="95.9" lengthAdjust="spacingAndGlyphs">H</tspan></text><rect x="207" y="480" width="640" height="44" fill="#c80000"/></g></g></g>
<g mask="url(#rm)"><g filter="url(#fb)"><g transform="translate(0,1066.5) scale(1,-1)">
  <g filter="url(#fg)" opacity=".616"><text y="524" fill="#d3d127"><tspan x="202.3" textLength="95.1" lengthAdjust="spacingAndGlyphs">R</tspan><tspan x="299.0" textLength="47.5" lengthAdjust="spacingAndGlyphs">I</tspan><tspan x="343.5" textLength="92.5" lengthAdjust="spacingAndGlyphs">S</tspan><tspan x="433.4" textLength="94.9" lengthAdjust="spacingAndGlyphs">H</tspan><tspan x="533.0" textLength="112.2" lengthAdjust="spacingAndGlyphs">A</tspan><tspan x="649.1" textLength="94.3" lengthAdjust="spacingAndGlyphs">B</tspan><tspan x="750.4" textLength="95.9" lengthAdjust="spacingAndGlyphs">H</tspan></text><g transform="translate(4.5,5)"><text y="524" fill="#d3d127"><tspan x="202.3" textLength="95.1" lengthAdjust="spacingAndGlyphs">R</tspan><tspan x="299.0" textLength="47.5" lengthAdjust="spacingAndGlyphs">I</tspan><tspan x="343.5" textLength="92.5" lengthAdjust="spacingAndGlyphs">S</tspan><tspan x="433.4" textLength="94.9" lengthAdjust="spacingAndGlyphs">H</tspan><tspan x="533.0" textLength="112.2" lengthAdjust="spacingAndGlyphs">A</tspan><tspan x="649.1" textLength="94.3" lengthAdjust="spacingAndGlyphs">B</tspan><tspan x="750.4" textLength="95.9" lengthAdjust="spacingAndGlyphs">H</tspan></text></g><rect x="207" y="452" width="640" height="58" fill="#d3d127"/><rect x="204" y="428" width="8" height="98" fill="#d3d127"/><rect x="842" y="428" width="8" height="98" fill="#d3d127"/></g>
  <g filter="url(#fo)" opacity=".95" transform="translate(8.5,8)"><text y="524" fill="#b5b040" stroke="#b5b040" stroke-width="7" stroke-linejoin="round"><tspan x="202.3" textLength="95.1" lengthAdjust="spacingAndGlyphs">R</tspan><tspan x="299.0" textLength="47.5" lengthAdjust="spacingAndGlyphs">I</tspan><tspan x="343.5" textLength="92.5" lengthAdjust="spacingAndGlyphs">S</tspan><tspan x="433.4" textLength="94.9" lengthAdjust="spacingAndGlyphs">H</tspan><tspan x="533.0" textLength="112.2" lengthAdjust="spacingAndGlyphs">A</tspan><tspan x="649.1" textLength="94.3" lengthAdjust="spacingAndGlyphs">B</tspan><tspan x="750.4" textLength="95.9" lengthAdjust="spacingAndGlyphs">H</tspan></text></g>
  <g transform="translate(4.5,5)"><text y="524" fill="#c80000" stroke="#fff" stroke-width="4.6"><tspan x="202.3" textLength="95.1" lengthAdjust="spacingAndGlyphs">R</tspan><tspan x="299.0" textLength="47.5" lengthAdjust="spacingAndGlyphs">I</tspan><tspan x="343.5" textLength="92.5" lengthAdjust="spacingAndGlyphs">S</tspan><tspan x="433.4" textLength="94.9" lengthAdjust="spacingAndGlyphs">H</tspan><tspan x="533.0" textLength="112.2" lengthAdjust="spacingAndGlyphs">A</tspan><tspan x="649.1" textLength="94.3" lengthAdjust="spacingAndGlyphs">B</tspan><tspan x="750.4" textLength="95.9" lengthAdjust="spacingAndGlyphs">H</tspan></text><text y="524" fill="#c80000" stroke="#c80000" stroke-width="1.2"><tspan x="202.3" textLength="95.1" lengthAdjust="spacingAndGlyphs">R</tspan><tspan x="299.0" textLength="47.5" lengthAdjust="spacingAndGlyphs">I</tspan><tspan x="343.5" textLength="92.5" lengthAdjust="spacingAndGlyphs">S</tspan><tspan x="433.4" textLength="94.9" lengthAdjust="spacingAndGlyphs">H</tspan><tspan x="533.0" textLength="112.2" lengthAdjust="spacingAndGlyphs">A</tspan><tspan x="649.1" textLength="94.3" lengthAdjust="spacingAndGlyphs">B</tspan><tspan x="750.4" textLength="95.9" lengthAdjust="spacingAndGlyphs">H</tspan></text></g>
  <text y="524" fill="#c80000" stroke="#fff" stroke-width="4.6"><tspan x="202.3" textLength="95.1" lengthAdjust="spacingAndGlyphs">R</tspan><tspan x="299.0" textLength="47.5" lengthAdjust="spacingAndGlyphs">I</tspan><tspan x="343.5" textLength="92.5" lengthAdjust="spacingAndGlyphs">S</tspan><tspan x="433.4" textLength="94.9" lengthAdjust="spacingAndGlyphs">H</tspan><tspan x="533.0" textLength="112.2" lengthAdjust="spacingAndGlyphs">A</tspan><tspan x="649.1" textLength="94.3" lengthAdjust="spacingAndGlyphs">B</tspan><tspan x="750.4" textLength="95.9" lengthAdjust="spacingAndGlyphs">H</tspan></text>
  <text y="524" fill="#c80000" stroke="#c80000" stroke-width="1.2"><tspan x="202.3" textLength="95.1" lengthAdjust="spacingAndGlyphs">R</tspan><tspan x="299.0" textLength="47.5" lengthAdjust="spacingAndGlyphs">I</tspan><tspan x="343.5" textLength="92.5" lengthAdjust="spacingAndGlyphs">S</tspan><tspan x="433.4" textLength="94.9" lengthAdjust="spacingAndGlyphs">H</tspan><tspan x="533.0" textLength="112.2" lengthAdjust="spacingAndGlyphs">A</tspan><tspan x="649.1" textLength="94.3" lengthAdjust="spacingAndGlyphs">B</tspan><tspan x="750.4" textLength="95.9" lengthAdjust="spacingAndGlyphs">H</tspan></text>
</g></g></g>
<g>
  <g filter="url(#fg)" opacity=".616"><text y="524" fill="#d3d127"><tspan x="202.3" textLength="95.1" lengthAdjust="spacingAndGlyphs">R</tspan><tspan x="299.0" textLength="47.5" lengthAdjust="spacingAndGlyphs">I</tspan><tspan x="343.5" textLength="92.5" lengthAdjust="spacingAndGlyphs">S</tspan><tspan x="433.4" textLength="94.9" lengthAdjust="spacingAndGlyphs">H</tspan><tspan x="533.0" textLength="112.2" lengthAdjust="spacingAndGlyphs">A</tspan><tspan x="649.1" textLength="94.3" lengthAdjust="spacingAndGlyphs">B</tspan><tspan x="750.4" textLength="95.9" lengthAdjust="spacingAndGlyphs">H</tspan></text><g transform="translate(4.5,5)"><text y="524" fill="#d3d127"><tspan x="202.3" textLength="95.1" lengthAdjust="spacingAndGlyphs">R</tspan><tspan x="299.0" textLength="47.5" lengthAdjust="spacingAndGlyphs">I</tspan><tspan x="343.5" textLength="92.5" lengthAdjust="spacingAndGlyphs">S</tspan><tspan x="433.4" textLength="94.9" lengthAdjust="spacingAndGlyphs">H</tspan><tspan x="533.0" textLength="112.2" lengthAdjust="spacingAndGlyphs">A</tspan><tspan x="649.1" textLength="94.3" lengthAdjust="spacingAndGlyphs">B</tspan><tspan x="750.4" textLength="95.9" lengthAdjust="spacingAndGlyphs">H</tspan></text></g><rect x="207" y="452" width="640" height="58" fill="#d3d127"/><rect x="204" y="428" width="8" height="98" fill="#d3d127"/><rect x="842" y="428" width="8" height="98" fill="#d3d127"/></g>
  <g filter="url(#fo)" opacity=".95" transform="translate(8.5,8)"><text y="524" fill="#b5b040" stroke="#b5b040" stroke-width="7" stroke-linejoin="round"><tspan x="202.3" textLength="95.1" lengthAdjust="spacingAndGlyphs">R</tspan><tspan x="299.0" textLength="47.5" lengthAdjust="spacingAndGlyphs">I</tspan><tspan x="343.5" textLength="92.5" lengthAdjust="spacingAndGlyphs">S</tspan><tspan x="433.4" textLength="94.9" lengthAdjust="spacingAndGlyphs">H</tspan><tspan x="533.0" textLength="112.2" lengthAdjust="spacingAndGlyphs">A</tspan><tspan x="649.1" textLength="94.3" lengthAdjust="spacingAndGlyphs">B</tspan><tspan x="750.4" textLength="95.9" lengthAdjust="spacingAndGlyphs">H</tspan></text></g>
  <g transform="translate(4.5,5)"><text y="524" fill="#c80000" stroke="#fff" stroke-width="4.6"><tspan x="202.3" textLength="95.1" lengthAdjust="spacingAndGlyphs">R</tspan><tspan x="299.0" textLength="47.5" lengthAdjust="spacingAndGlyphs">I</tspan><tspan x="343.5" textLength="92.5" lengthAdjust="spacingAndGlyphs">S</tspan><tspan x="433.4" textLength="94.9" lengthAdjust="spacingAndGlyphs">H</tspan><tspan x="533.0" textLength="112.2" lengthAdjust="spacingAndGlyphs">A</tspan><tspan x="649.1" textLength="94.3" lengthAdjust="spacingAndGlyphs">B</tspan><tspan x="750.4" textLength="95.9" lengthAdjust="spacingAndGlyphs">H</tspan></text><text y="524" fill="#c80000" stroke="#c80000" stroke-width="1.2"><tspan x="202.3" textLength="95.1" lengthAdjust="spacingAndGlyphs">R</tspan><tspan x="299.0" textLength="47.5" lengthAdjust="spacingAndGlyphs">I</tspan><tspan x="343.5" textLength="92.5" lengthAdjust="spacingAndGlyphs">S</tspan><tspan x="433.4" textLength="94.9" lengthAdjust="spacingAndGlyphs">H</tspan><tspan x="533.0" textLength="112.2" lengthAdjust="spacingAndGlyphs">A</tspan><tspan x="649.1" textLength="94.3" lengthAdjust="spacingAndGlyphs">B</tspan><tspan x="750.4" textLength="95.9" lengthAdjust="spacingAndGlyphs">H</tspan></text></g>
  <text y="524" fill="#c80000" stroke="#fff" stroke-width="4.6"><tspan x="202.3" textLength="95.1" lengthAdjust="spacingAndGlyphs">R</tspan><tspan x="299.0" textLength="47.5" lengthAdjust="spacingAndGlyphs">I</tspan><tspan x="343.5" textLength="92.5" lengthAdjust="spacingAndGlyphs">S</tspan><tspan x="433.4" textLength="94.9" lengthAdjust="spacingAndGlyphs">H</tspan><tspan x="533.0" textLength="112.2" lengthAdjust="spacingAndGlyphs">A</tspan><tspan x="649.1" textLength="94.3" lengthAdjust="spacingAndGlyphs">B</tspan><tspan x="750.4" textLength="95.9" lengthAdjust="spacingAndGlyphs">H</tspan></text>
  <text y="524" fill="#c80000" stroke="#c80000" stroke-width="1.2"><tspan x="202.3" textLength="95.1" lengthAdjust="spacingAndGlyphs">R</tspan><tspan x="299.0" textLength="47.5" lengthAdjust="spacingAndGlyphs">I</tspan><tspan x="343.5" textLength="92.5" lengthAdjust="spacingAndGlyphs">S</tspan><tspan x="433.4" textLength="94.9" lengthAdjust="spacingAndGlyphs">H</tspan><tspan x="533.0" textLength="112.2" lengthAdjust="spacingAndGlyphs">A</tspan><tspan x="649.1" textLength="94.3" lengthAdjust="spacingAndGlyphs">B</tspan><tspan x="750.4" textLength="95.9" lengthAdjust="spacingAndGlyphs">H</tspan></text>
</g>
<rect x="176" y="532" width="24" height="1.8" fill="url(#hl)"/><rect x="850" y="532" width="30" height="1.8" fill="url(#hl)"/>
</svg>
<!-- scrollbar -->
<div class="a" style="left:1340px;top:184px;width:17px;height:504px;background:#f3f3f3"></div>
<div class="a" style="left:1345px;top:200px;width:8px;height:158px;border-radius:4px;background:#6e6e6e"></div>
<svg style="left:1343px;top:188px" width="11" height="7" viewBox="0 0 11 7"><path d="M.5 6.5 L5.5 .8 L10.5 6.5 Z" fill="#6e6e6e"/></svg>
<svg style="left:1343px;top:676px" width="11" height="7" viewBox="0 0 11 7"><path d="M.5 .5 L5.5 6.2 L10.5 .5 Z" fill="#6e6e6e"/></svg>

<!-- STATUS BAR -->
<div class="a" style="left:0;top:688px;width:1357px;height:22px;background:#f3f3f3;border-top:1px solid #fbfbfb"></div>
<div class="a" style="left:1098px;top:688px;width:38px;height:22px;background:#dadada"></div>
<!-- proofing book -->
<svg style="left:183px;top:691px" width="17" height="16" viewBox="0 0 17 16"><path d="M1 2 L1 12 L6.5 12 L8 13.5 L9.5 12 M8 3.5 L8 11" fill="none" stroke="#333" stroke-width="1.25"/><path d="M1 2 L6.5 2 L8 3.5 L9.5 2 L15 2 L15 8" fill="none" stroke="#333" stroke-width="1.25"/><path d="M10.5 11 L12.5 13.5 L16 8.5" fill="none" stroke="#333" stroke-width="1.3"/></svg>
<!-- macro icon -->
<svg style="left:306px;top:691px" width="17" height="16" viewBox="0 0 17 16"><rect x="1" y="2" width="13" height="11" fill="none" stroke="#333" stroke-width="1.25"/><path d="M1 5 L14 5" stroke="#333" stroke-width="1.25"/><path d="M3.5 8 L7 8 M3.5 10.5 L7 10.5" stroke="#444" stroke-width="1"/><circle cx="11.5" cy="10.5" r="3" fill="#f3f3f3" stroke="#333" stroke-width="1.25"/><circle cx="11.5" cy="10.5" r="1" fill="#444"/></svg>
<!-- accessibility -->
<svg style="left:338px;top:690px" width="17" height="17" viewBox="0 0 17 17"><circle cx="7" cy="3" r="1.8" fill="none" stroke="#333" stroke-width="1.25"/><path d="M1.5 6 L7 7.5 L12.5 6 M7 7.5 L7 10.5 L4 15.5 M7 10.5 L9 13" fill="none" stroke="#333" stroke-width="1.3"/><path d="M10.5 11 L15 15.5 M15 11 L10.5 15.5" stroke="#333" stroke-width="1.3"/></svg>
<!-- focus -->
<svg style="left:998px;top:691px" width="15" height="16" viewBox="0 0 15 16"><path d="M.6 4 L.6 1 L3 1 M11 1 L13.4 1 L13.4 4 M13.4 11 L13.4 14.5 L11 14.5 M3 14.5 L.6 14.5 L.6 11" fill="none" stroke="#333" stroke-width="1.25"/><path d="M4 3.5 L8 3.5 L10.5 6 L10.5 12 L4 12 Z M8 3.5 L8 6 L10.5 6" fill="none" stroke="#444" stroke-width="1"/></svg>
<!-- read mode -->
<svg style="left:1069px;top:691px" width="16" height="15" viewBox="0 0 16 15"><path d="M1 1.5 L6.5 1.5 L8 2.8 L9.5 1.5 L15 1.5 L15 12.5 L9.5 12.5 L8 13.8 L6.5 12.5 L1 12.5 Z M8 2.8 L8 13.5" fill="none" stroke="#333" stroke-width="1.25"/><path d="M3 4.5 L6 4.5 M3 7 L6 7 M3 9.5 L6 9.5 M10 4.5 L13 4.5 M10 7 L13 7 M10 9.5 L13 9.5" stroke="#444" stroke-width=".9"/></svg>
<!-- print layout -->
<svg style="left:1110px;top:691px" width="14" height="16" viewBox="0 0 14 16"><rect x="1" y="1" width="12" height="14" fill="#fff" stroke="#333" stroke-width="1.2"/><path d="M3.5 4 L10.5 4 M3.5 6.5 L10.5 6.5 M3.5 9 L10.5 9 M3.5 11.5 L10.5 11.5" stroke="#333" stroke-width="1"/></svg>
<!-- web layout -->
<svg style="left:1149px;top:691px" width="17" height="16" viewBox="0 0 17 16"><rect x="1" y="1" width="12" height="12" fill="none" stroke="#333" stroke-width="1.25"/><path d="M1 4 L13 4 M3 6.5 L10 6.5 M3 9 L7 9" stroke="#444" stroke-width="1"/><circle cx="11.5" cy="11" r="3.6" fill="#f3f3f3" stroke="#333" stroke-width="1.25"/><path d="M8 11 L15 11 M11.5 7.5 L11.5 14.5" stroke="#444" stroke-width=".8"/></svg>
<!-- zoom slider -->
<div class="a" style="left:1183px;top:698.5px;width:8px;height:1px;background:#333"></div>
<div class="a" style="left:1197px;top:698.5px;width:100px;height:1px;background:#777"></div>
<div class="a" style="left:1248px;top:694px;width:5px;height:11px;background:#6a6a6a"></div>
<div class="a" style="left:1301.2px;top:698.5px;width:7.6px;height:1px;background:#333"></div>
<div class="a" style="left:1304.5px;top:695.2px;width:1px;height:7.6px;background:#333"></div>

<!-- TASKBAR -->
<div class="a" style="left:0;top:710px;width:1357px;height:40px;background:linear-gradient(90deg,#3c3a2c 0,#3d3b2c 20%,#44422e 51%,#43402d 54.5%,#3c2d25 59%,#3f2f28 64%,#47382f 72.5%,#40281f 82%,#38222a 90%,#261b26 95%,#1c1820 100%)"></div>
<div class="a" style="left:287px;top:710px;width:48px;height:40px;background:#68645a"></div>
<div class="a" style="left:287px;top:748px;width:48px;height:2px;background:#76b9ed"></div>
<div class="a" style="left:1352px;top:710px;width:1px;height:40px;background:#6a6468"></div>
<!-- start -->
<svg style="left:6.5px;top:721.5px" width="16.5" height="16.5" viewBox="0 0 17 17"><path d="M0 2.3 L7 1.3 L7 8 L0 8 Z M8 1.2 L17 0 L17 8 L8 8 Z M0 9 L7 9 L7 15.7 L0 14.7 Z M8 9 L17 9 L17 17 L8 15.8 Z" fill="#fff"/></svg>
<!-- purple app -->
<svg style="left:53px;top:717px" width="24" height="24" viewBox="0 0 24 24"><circle cx="12" cy="12" r="11.5" fill="#b36fd6"/><circle cx="12" cy="12" r="9" fill="#c78be6"/><path d="M13 3 L17 3 L9 21 L5 21 Z" fill="#e8364f"/><path d="M17.5 5 L20 6 L14 20 L11 20 Z" fill="#f26a5a"/></svg>
<!-- chrome -->
<svg style="left:102px;top:717px" width="25" height="25" viewBox="0 0 25 25"><circle cx="12.5" cy="12.5" r="12" fill="#e33b2e"/><path d="M12.5 12.5 L2.1 6.5 A12 12 0 0 0 12.5 24.5 L18 15.5 Z" fill="#2da94f"/><path d="M12.5 12.5 L18.5 15.5 L12.5 24.5 A12 12 0 0 0 22.9 6.5 L12.5 6.5 Z" fill="#fdbd00"/><circle cx="12.5" cy="12.5" r="5.6" fill="#fff"/><circle cx="12.5" cy="12.5" r="4.4" fill="#3f7ee8"/></svg>
<!-- explorer -->
<svg style="left:152px;top:719px" width="24" height="21" viewBox="0 0 24 21"><path d="M1 1.5 L9 1.5 L11 4 L23 4 L23 19 L1 19 Z" fill="#e8a92e"/><rect x="1" y="6" width="22" height="13" fill="#fbd567"/><path d="M6 19 L6 12 L18 12 L18 19 L15 19 L15 15 L9 15 L9 19 Z" fill="#3a8fd8"/></svg>
<!-- white doc -->
<svg style="left:203px;top:716px" width="20" height="26" viewBox="0 0 20 26"><path d="M1 1 L12.5 1 L19 7.5 L19 25 L1 25 Z" fill="#fdfdfd" stroke="#5a5a50" stroke-width="1.2"/><path d="M12.5 1 L19 1 L19 7.5 Z" fill="#76766e"/></svg>
<!-- powerpoint -->
<svg style="left:249px;top:717px" width="26" height="25" viewBox="0 0 26 25"><circle cx="14.5" cy="12.5" r="11" fill="#ed6c47"/><path d="M14.5 1.5 A11 11 0 0 1 25.5 12.5 L14.5 12.5 Z" fill="#ff8f6b"/><path d="M3.5 12.5 A11 11 0 0 0 25.5 12.5 Z" fill="#d35230"/><rect x="1" y="6.5" width="12.5" height="12.5" rx="1" fill="#c43e1c"/></svg>
<!-- word -->
<svg style="left:297px;top:717px" width="26" height="25" viewBox="0 0 26 25"><rect x="7" y="1" width="18" height="23" rx="1.5" fill="#41a5ee"/><rect x="7" y="7" width="18" height="6" fill="#2b7cd3"/><rect x="7" y="13" width="18" height="5.5" fill="#185abd"/><path d="M7 18.5 L25 18.5 L25 22.5 Q25 24 23.5 24 L7 24 Z" fill="#103f91"/><rect x="1" y="6.5" width="12.5" height="12.5" rx="1" fill="#185abd"/></svg>
<!-- tray chevron -->
<svg style="left:1107px;top:725px" width="13" height="8" viewBox="0 0 13 8"><path d="M1 7 L6.5 1.5 L12 7" fill="none" stroke="#fff" stroke-width="1.3"/></svg>
<!-- battery plug -->
<svg style="left:1130px;top:722px" width="18" height="14" viewBox="0 0 18 14"><rect x="4.5" y="4" width="11" height="7.5" fill="none" stroke="#fff" stroke-width="1.1"/><rect x="16" y="6" width="1.5" height="3.5" fill="#fff"/><rect x="6" y="5.5" width="5" height="4.5" fill="#fff"/><path d="M2 0 L2 3 M5 0 L5 3 M.8 3 L6.2 3 L6.2 5 Q6.2 7 3.5 7 Q.8 7 .8 5 Z M3.5 7 L3.5 10" stroke="#fff" stroke-width="1" fill="#fff"/></svg>
<!-- wifi -->
<svg style="left:1156px;top:722px" width="15" height="15" viewBox="0 0 15 15"><circle cx="12" cy="12.5" r="1.6" fill="#fff"/><path d="M1 13.5 A12.5 12.5 0 0 1 13.5 1" fill="none" stroke="#fff" stroke-width="1.1"/><path d="M4.2 13.5 A9.3 9.3 0 0 1 13.5 4.2" fill="none" stroke="#fff" stroke-width="1.1"/><path d="M7.4 13.5 A6.1 6.1 0 0 1 13.5 7.4" fill="none" stroke="#fff" stroke-width="1.1"/></svg>
<!-- volume -->
<svg style="left:1177px;top:722px" width="18" height="15" viewBox="0 0 18 15"><path d="M1 5 L3.5 5 L7.5 1.2 L7.5 13.8 L3.5 10 L1 10 Z" fill="none" stroke="#fff" stroke-width="1.1" stroke-linejoin="round"/><path d="M10 5 Q11.5 7.5 10 10 M12.3 3 Q15 7.5 12.3 12 M14.8 1.2 Q18.5 7.5 14.8 13.8" fill="none" stroke="#fff" stroke-width="1.1"/></svg>
<!-- notification -->
<svg style="left:1315px;top:721px" width="22" height="24" viewBox="0 0 22 24"><path d="M1 1 L17 1 L17 13 L6 13 L6 16.5 L2.5 13 L1 13 Z" fill="#fff"/><path d="M3.5 4.5 L14.5 4.5 M3.5 7 L14.5 7 M3.5 9.5 L14.5 9.5" stroke="#2a1e28" stroke-width="1"/><circle cx="16.8" cy="16.5" r="7.3" fill="#2a1e28" stroke="#bdb8bd" stroke-width="1"/></svg>

<div id="labels">
<span class="t" style="left:39px;top:0.03px;font-size:12.6px;line-height:12.6px;color:#262626;letter-spacing:-0.578px;">AutoSave</span>
<span class="t" style="left:118.6px;top:-0.21px;font-size:12.3px;line-height:12.3px;color:#262626;letter-spacing:-0.096px;">Off</span>
<span class="t" style="left:311.7px;top:-0.50px;font-size:13px;line-height:13px;color:#3b3b3b;letter-spacing:-0.072px;">A</span>
<span class="t" style="left:433px;top:0.96px;font-size:12.8px;line-height:12.8px;color:#262626;letter-spacing:-1.147px;">K .G .F</span>
<span class="t" style="left:470.5px;top:1.87px;font-size:11.5px;line-height:11.5px;color:#262626;letter-spacing:0.969px;">•</span>
<span class="t" style="left:481px;top:0.96px;font-size:12.8px;line-height:12.8px;color:#262626;letter-spacing:-0.859px;">Saved</span>
<span class="t" style="left:651px;top:0.96px;font-size:12.8px;line-height:12.8px;color:#555;letter-spacing:-0.091px;">Search</span>
<span class="t" style="left:1100px;top:0.66px;font-size:12.8px;line-height:12.8px;color:#262626;letter-spacing:-0.902px;">Ravi</span>
<span class="t" style="left:1139.6px;top:1.11px;font-size:10.5px;line-height:10.5px;color:#fff;letter-spacing:-0.794px;">R</span>
<span class="t" style="left:8.5px;top:0.80px;font-size:8.5px;line-height:8.5px;color:#fff;font-weight:700;letter-spacing:-0.531px;">W</span>
<span class="t" style="left:13px;top:38.50px;font-size:13px;line-height:13px;color:#262626;letter-spacing:-0.738px;">File</span>
<span class="t" style="left:58px;top:38.50px;font-size:13px;line-height:13px;color:#262626;font-weight:700;letter-spacing:0.219px;">Home</span>
<span class="t" style="left:115px;top:38.50px;font-size:13px;line-height:13px;color:#262626;letter-spacing:-0.086px;">Insert</span>
<span class="t" style="left:168px;top:38.50px;font-size:13px;line-height:13px;color:#262626;letter-spacing:-0.086px;">Draw</span>
<span class="t" style="left:218px;top:38.50px;font-size:13px;line-height:13px;color:#262626;letter-spacing:-0.245px;">Design</span>
<span class="t" style="left:279px;top:38.50px;font-size:13px;line-height:13px;color:#262626;letter-spacing:-0.174px;">Layout</span>
<span class="t" style="left:338px;top:38.50px;font-size:13px;line-height:13px;color:#262626;letter-spacing:-0.248px;">References</span>
<span class="t" style="left:422px;top:38.50px;font-size:13px;line-height:13px;color:#262626;letter-spacing:0.039px;">Mailings</span>
<span class="t" style="left:492px;top:38.50px;font-size:13px;line-height:13px;color:#262626;letter-spacing:-0.438px;">Review</span>
<span class="t" style="left:552px;top:38.50px;font-size:13px;line-height:13px;color:#262626;letter-spacing:-0.488px;">View</span>
<span class="t" style="left:599px;top:38.50px;font-size:13px;line-height:13px;color:#262626;letter-spacing:-0.188px;">Help</span>
<span class="t" style="left:1289.5px;top:38.70px;font-size:13px;line-height:13px;color:#fff;letter-spacing:-0.501px;">Share</span>
<span class="t" style="left:18px;top:104.42px;font-size:12.5px;line-height:12.5px;color:#262626;letter-spacing:-0.794px;">Paste</span>
<span class="t" style="left:11px;top:143.84px;font-size:12px;line-height:12px;color:#262626;letter-spacing:-0.042px;">Clipboard</span>
<span class="t" style="left:99px;top:78.42px;font-size:12.5px;line-height:12.5px;color:#262626;letter-spacing:-0.359px;">Algerian</span>
<span class="t" style="left:225px;top:78.42px;font-size:12.5px;line-height:12.5px;color:#262626;letter-spacing:0.547px;">90</span>
<span class="t" style="left:272.3px;top:74.39px;font-size:17.5px;line-height:17.5px;color:#444;letter-spacing:-1.387px;">A</span>
<span class="t" style="left:300px;top:77.52px;font-size:13.8px;line-height:13.8px;color:#444;letter-spacing:-0.903px;">A</span>
<span class="t" style="left:326.5px;top:78.20px;font-size:13px;line-height:13px;color:#444;letter-spacing:0.047px;">Aa</span>
<span class="t" style="left:371.3px;top:74.39px;font-size:17.5px;line-height:17.5px;color:#444;letter-spacing:-2.387px;">A</span>
<span class="t" style="left:102px;top:108.45px;font-size:14px;line-height:14px;color:#262626;font-weight:700;letter-spacing:-1.125px;">B</span>
<span class="t" style="left:129px;top:107.60px;font-size:15px;line-height:15px;color:#333;letter-spacing:1.000px;font-style:italic;font-family:Liberation Serif,serif;">I</span>
<span class="t" style="left:153px;top:108.07px;font-size:13.5px;line-height:13.5px;color:#333;letter-spacing:0.250px;">U</span>
<span class="t" style="left:193px;top:110.42px;font-size:12.5px;line-height:12.5px;color:#444;letter-spacing:-0.453px;">ab</span>
<span class="t" style="left:222px;top:108.45px;font-size:14px;line-height:14px;color:#333;font-weight:700;letter-spacing:-0.797px;">x</span>
<span class="t" style="left:229.5px;top:117.65px;font-size:7.5px;line-height:7.5px;color:#2b7cd3;font-weight:700;letter-spacing:0.328px;">2</span>
<span class="t" style="left:248px;top:108.45px;font-size:14px;line-height:14px;color:#333;font-weight:700;letter-spacing:-0.797px;">x</span>
<span class="t" style="left:255.5px;top:107.65px;font-size:7.5px;line-height:7.5px;color:#2b7cd3;font-weight:700;letter-spacing:0.328px;">2</span>
<span class="t" style="left:274px;top:105.79px;font-size:19.5px;line-height:19.5px;color:#fff;font-weight:700;letter-spacing:0.406px;-webkit-text-stroke:1.5px #2272c3;">A</span>
<span class="t" style="left:359.2px;top:106.43px;font-size:14.5px;line-height:14.5px;color:#444;letter-spacing:-0.072px;">A</span>
<span class="t" style="left:223px;top:143.84px;font-size:12px;line-height:12px;color:#262626;letter-spacing:-0.254px;">Font</span>
<span class="t" style="left:594px;top:74.53px;font-size:10px;line-height:10px;color:#2b7cd3;letter-spacing:0.328px;">A</span>
<span class="t" style="left:594px;top:83.13px;font-size:10px;line-height:10px;color:#333;letter-spacing:0.891px;">Z</span>
<span class="t" style="left:624.5px;top:75.76px;font-size:16px;line-height:16px;color:#333;font-weight:700;letter-spacing:1.294px;">&para;</span>
<span class="t" style="left:490px;top:143.84px;font-size:12px;line-height:12px;color:#262626;letter-spacing:-0.339px;">Paragraph</span>
<span class="t" style="left:692px;top:95.15px;font-size:14px;line-height:14px;color:#1a1a1a;letter-spacing:0.146px;">Normal</span>
<span class="t" style="left:789px;top:95.15px;font-size:14px;line-height:14px;color:#1a1a1a;letter-spacing:-0.439px;">No Spacing</span>
<span class="t" style="left:888px;top:92.87px;font-size:18.7px;line-height:18.7px;color:#2f5496;letter-spacing:-0.023px;-webkit-text-stroke:.45px #fff;">Heading 1</span>
<span class="t" style="left:1004px;top:94.47px;font-size:14.8px;line-height:14.8px;color:#2f5496;letter-spacing:0.170px;-webkit-text-stroke:.3px #fff;">Heading 2</span>
<span class="t" style="left:1117.6px;top:84.74px;font-size:33.5px;line-height:33.5px;color:#1a1a1a;letter-spacing:0.031px;-webkit-text-stroke:.9px #fff;">Title</span>
<span class="t" style="left:916px;top:143.84px;font-size:12px;line-height:12px;color:#262626;letter-spacing:-0.781px;">Styles</span>
<span class="t" style="left:1261px;top:70.62px;font-size:12.5px;line-height:12.5px;color:#262626;letter-spacing:-0.582px;">Find</span>
<span class="t" style="left:1245.5px;top:93.26px;font-size:9.5px;line-height:9.5px;color:#b146c2;letter-spacing:-0.297px;">b</span>
<span class="t" style="left:1249.6px;top:101.56px;font-size:9.5px;line-height:9.5px;color:#2b7cd3;letter-spacing:-0.350px;">c</span>
<span class="t" style="left:1260px;top:96.82px;font-size:12.5px;line-height:12.5px;color:#262626;letter-spacing:-0.696px;">Replace</span>
<span class="t" style="left:1260px;top:122.62px;font-size:12.5px;line-height:12.5px;color:#262626;letter-spacing:-0.625px;">Select</span>
<span class="t" style="left:1255px;top:143.84px;font-size:12px;line-height:12px;color:#262626;letter-spacing:0.042px;">Editing</span>
<span class="t" style="left:1064px;top:634.49px;font-size:19.5px;line-height:19.5px;color:#b2b2b2;letter-spacing:0.194px;">Activate Windows</span>
<span class="t" style="left:1064px;top:659.73px;font-size:14.5px;line-height:14.5px;color:#b8b8b8;letter-spacing:0.203px;">Go to Settings to activate Windows.</span>
<span class="t" style="left:-3px;top:693.84px;font-size:12px;line-height:12px;color:#333;letter-spacing:-0.971px;">PAGE: 1</span>
<span class="t" style="left:52px;top:693.84px;font-size:12px;line-height:12px;color:#333;letter-spacing:-0.490px;">Page 1 of 1</span>
<span class="t" style="left:129px;top:693.84px;font-size:12px;line-height:12px;color:#333;letter-spacing:-0.172px;">1 word</span>
<span class="t" style="left:216px;top:693.84px;font-size:12px;line-height:12px;color:#333;letter-spacing:-0.248px;">English (India)</span>
<span class="t" style="left:357px;top:693.84px;font-size:12px;line-height:12px;color:#333;letter-spacing:-0.272px;">Accessibility: Investigate</span>
<span class="t" style="left:1016px;top:693.84px;font-size:12px;line-height:12px;color:#333;letter-spacing:-0.738px;">Focus</span>
<span class="t" style="left:1322px;top:693.84px;font-size:12px;line-height:12px;color:#333;letter-spacing:-0.926px;">130%</span>
<span class="t" style="left:253.5px;top:725.11px;font-size:10.5px;line-height:10.5px;color:#fff;font-weight:700;letter-spacing:-0.516px;">P</span>
<span class="t" style="left:299px;top:725.11px;font-size:10.5px;line-height:10.5px;color:#fff;font-weight:700;letter-spacing:1.578px;">W</span>
<span class="t" style="left:1204px;top:724.77px;font-size:11.5px;line-height:11.5px;color:#fff;letter-spacing:-0.641px;">ENG</span>
<span class="t" style="left:1255px;top:715.27px;font-size:11.5px;line-height:11.5px;color:#fff;letter-spacing:0.013px;">11:22</span>
<span class="t" style="left:1240px;top:733.77px;font-size:11.5px;line-height:11.5px;color:#fff;letter-spacing:-0.083px;">05-05-2023</span>
<span class="t" style="left:1329px;top:732.41px;font-size:10.5px;line-height:10.5px;color:#fff;font-weight:700;letter-spacing:-0.044px;">4</span>
</div>
</body></html>
